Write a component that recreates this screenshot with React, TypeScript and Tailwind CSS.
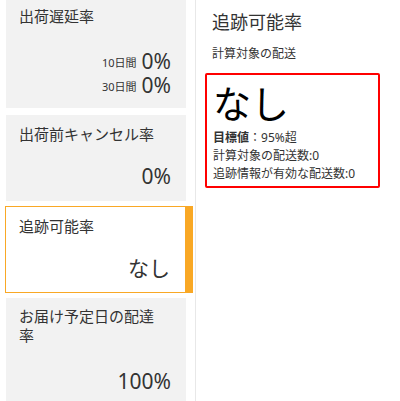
const font = {
  fontFamily: '"Noto Sans", "Noto Sans CJK JP", sans-serif',
};

function Card({
  title,
  children,
  selected = false,
  className = "",
}: {
  title: React.ReactNode;
  children: React.ReactNode;
  selected?: boolean;
  className?: string;
}) {
  if (selected) {
    return (
      <div
        className={`-ml-px w-[188px] shrink-0 border border-r-[8px] border-[#f9a825] bg-white flex flex-col justify-between pl-[13px] pr-[15px] pt-[9px] pb-[10px] ${className}`}
      >
        <div className="text-[15px] leading-[20px] text-[#333]">{title}</div>
        <div className="text-right">{children}</div>
      </div>
    );
  }
  return (
    <div
      className={`w-[180px] shrink-0 bg-[#f2f2f2] flex flex-col justify-between pl-[13px] pr-[15px] pt-[9px] pb-[11px] ${className}`}
    >
      <div className="text-[15px] leading-[20px] text-[#333]">{title}</div>
      <div className="text-right">{children}</div>
    </div>
  );
}

export default function App() {
  return (
    <div className="w-[400px] h-[401px] overflow-hidden bg-white flex text-[#333]" style={font}>
      <div className="w-[196px] shrink-0 border-r border-[#e8e8e8] pl-[6px] flex flex-col">
        <Card title="出荷遅延率" className="h-[111px] -mt-[3px] mb-[7px]">
          <div className="flex items-center justify-end gap-[5px] h-[24px]">
            <span className="text-[11px] leading-[14px] mt-[3px]">10日間</span>
            <span className="text-[21px] leading-[24px]">0%</span>
          </div>
          <div className="flex items-center justify-end gap-[5px] h-[24px]">
            <span className="text-[11px] leading-[14px] mt-[3px]">30日間</span>
            <span className="text-[21px] leading-[24px]">0%</span>
          </div>
        </Card>
        <Card title="出荷前キャンセル率" className="h-[86px] mb-[5px]">
          <span className="text-[21px] leading-[24px]">0%</span>
        </Card>
        <Card title="追跡可能率" selected className="h-[87px] mb-[5px]">
          <span className="text-[21px] leading-[24px]">なし</span>
        </Card>
        <Card
          title={
            <span className="block leading-[19px]">
              お届け予定日の配達
              <br />率
            </span>
          }
          className="h-[108px]"
        >
          <span className="text-[21px] leading-[24px]">100%</span>
        </Card>
      </div>
      <div className="flex-1 pl-[9px] pr-[20px]">
        <div className="pl-[7px] pt-[10px] text-[18px] leading-[24px]">追跡可能率</div>
        <div className="pl-[7px] mt-[11px] text-[12px] leading-[18px]">計算対象の配送</div>
        <div className="mt-[10px] w-[175px] border-2 border-[#ff0000] rounded-[2px] px-[6px] pt-[6px] pb-[3px]">
          <div className="text-[38px] leading-[44px] text-black">なし</div>
          <div className="text-[12px] leading-[18px] mt-[4px]">
            <span className="font-bold">目標値</span>：95%超
          </div>
          <div className="text-[12px] leading-[18px]">計算対象の配送数:0</div>
          <div className="text-[12px] leading-[18px]">追跡情報が有効な配送数:0</div>
        </div>
      </div>
    </div>
  );
}
